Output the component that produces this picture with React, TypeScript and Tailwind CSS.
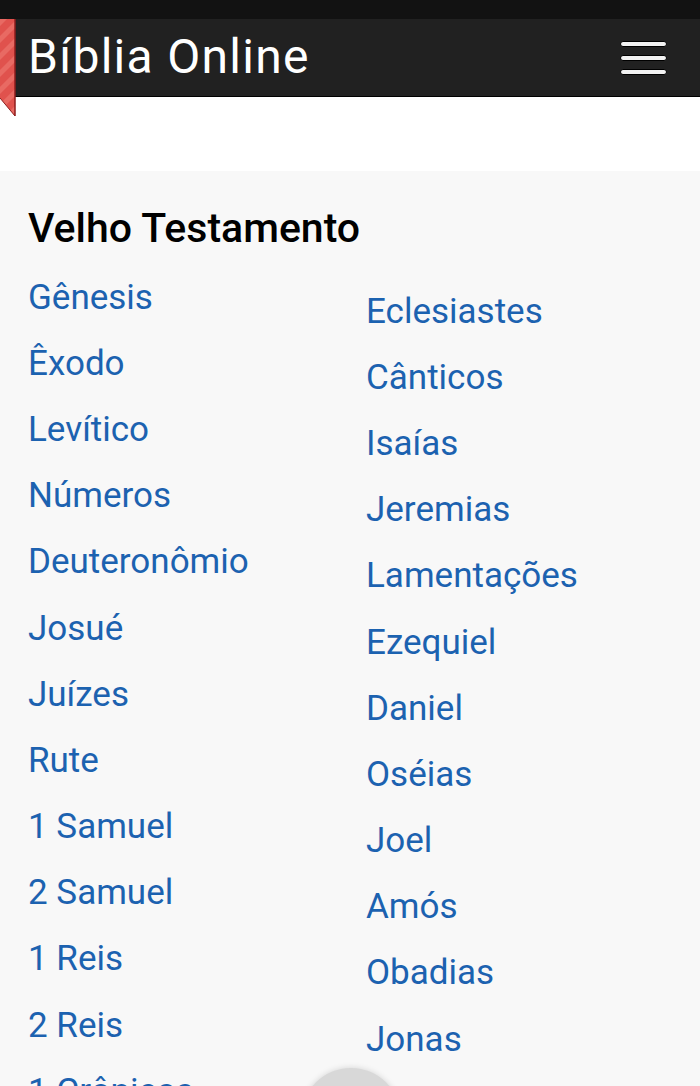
import { useState } from 'react';

const leftBooks = [
  'Gênesis',
  'Êxodo',
  'Levítico',
  'Números',
  'Deuteronômio',
  'Josué',
  'Juízes',
  'Rute',
  '1 Samuel',
  '2 Samuel',
  '1 Reis',
  '2 Reis',
  '1 Crônicas',
];

const rightBooks = [
  'Eclesiastes',
  'Cânticos',
  'Isaías',
  'Jeremias',
  'Lamentações',
  'Ezequiel',
  'Daniel',
  'Oséias',
  'Joel',
  'Amós',
  'Obadias',
  'Jonas',
];

function Ribbon() {
  return (
    <svg width="16" height="97" viewBox="0 0 16 97">
      <defs>
        <pattern id="stripes" width="12" height="12" patternUnits="userSpaceOnUse" patternTransform="rotate(-45)">
          <rect width="12" height="12" fill="#e0524d" />
          <rect width="12" height="5" fill="#e86a63" />
        </pattern>
      </defs>
      <polygon points="0,0 15,0 15,97 0,79" fill="url(#stripes)" />
      <line x1="15" y1="0" x2="15" y2="97" stroke="#8e1d1d" strokeWidth="1.5" />
      <line x1="0" y1="79" x2="15" y2="97" stroke="#8e1d1d" strokeWidth="1" />
    </svg>
  );
}

export default function App() {
  const [active, setActive] = useState<string | null>(null);

  const link = (b: string) => (
    <li key={b} className="h-[66.2px] flex items-center">
      <a
        href="#"
        onClick={(e) => {
          e.preventDefault();
          setActive(b);
        }}
        className={`text-[35px] leading-none text-[#1c62b0] whitespace-nowrap ${active === b ? 'underline' : ''}`}
      >
        {b}
      </a>
    </li>
  );

  return (
    <div className="h-[1086px] bg-[#f8f8f8] font-['Roboto',sans-serif] overflow-hidden relative">
      {/* status bar */}
      <div className="h-[19px] bg-[#121212]" />

      {/* header */}
      <div className="relative h-[78px] bg-[#212121] border-b border-black flex items-center justify-between pl-[28px] pr-[32px]">
        <h1 className="text-[48px] leading-none text-white tracking-[1.3px] pb-[1px]">Bíblia Online</h1>
        <button className="flex flex-col gap-[8px] mr-[1px]">
          <span className="block w-[47px] h-[6px] rounded-full bg-[#f2f2f2] border border-black" />
          <span className="block w-[47px] h-[6px] rounded-full bg-[#f2f2f2] border border-black" />
          <span className="block w-[47px] h-[6px] rounded-full bg-[#f2f2f2] border border-black" />
        </button>
        <div className="absolute left-0 top-0 z-10">
          <Ribbon />
        </div>
      </div>

      {/* white spacer */}
      <div className="h-[74px] bg-white" />

      {/* content */}
      <div className="pl-[28px] pr-[20px] pt-[33px]">
        <h2 className="text-[41px] leading-[48px] font-medium text-black">Velho Testamento</h2>
        <div className="grid grid-cols-[338px_1fr] mt-[12px]">
          <ul>{leftBooks.map(link)}</ul>
          <ul className="mt-[14px]">{rightBooks.map(link)}</ul>
        </div>
      </div>

      {/* floating button */}
      <div className="absolute left-[301px] top-[1068px] w-[100px] h-[100px] rounded-full bg-[#d8d8d8] shadow-[0_0_6px_rgba(0,0,0,0.15)]" />
    </div>
  );
}
